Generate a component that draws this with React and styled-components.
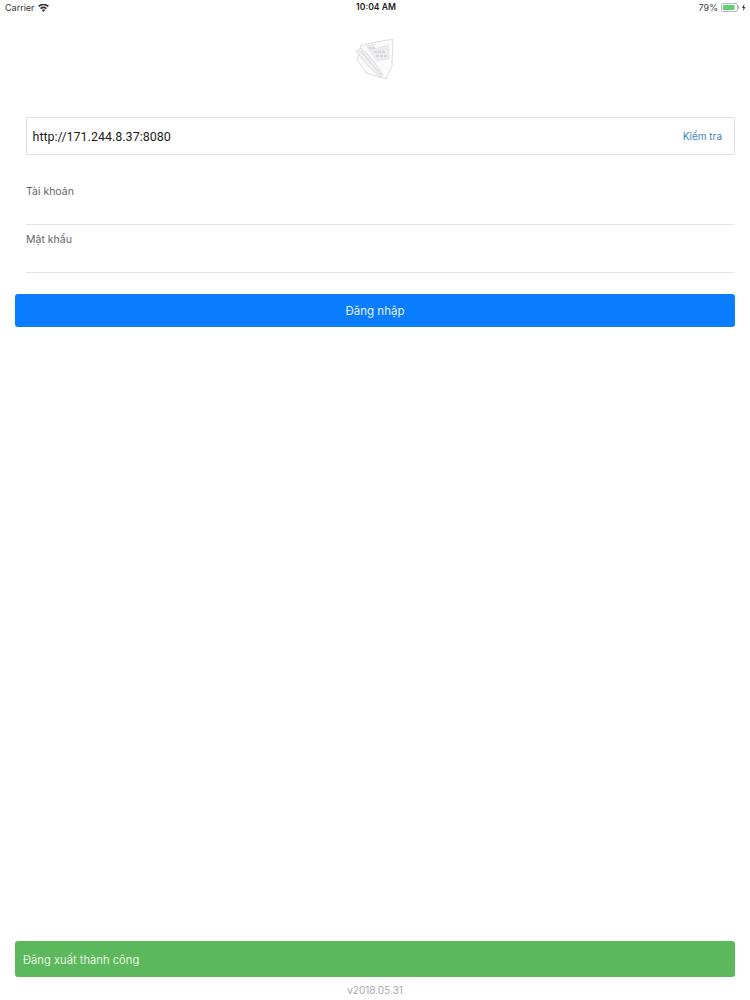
import React from "react";
import styled, { createGlobalStyle } from "styled-components";

const Global = createGlobalStyle`
  html, body { margin: 0; padding: 0; background: #fff; }
  body { font-family: Inter, "Noto Sans", "Liberation Sans", sans-serif; }
  * { box-sizing: border-box; }
`;

const Page = styled.div`
  width: 750px;
  height: 1000px;
  display: flex;
  flex-direction: column;
  overflow: hidden;
  background: #fff;
`;

const StatusBar = styled.div`
  height: 15px;
  padding: 0 3px 0 5px;
  display: grid;
  grid-template-columns: 1fr auto 1fr;
  align-items: center;
  font-size: 9px;
  line-height: 15px;
  color: #333;
`;

const StatusLeft = styled.div`
  display: flex;
  align-items: center;
  gap: 3px;
`;

const StatusTime = styled.div`
  font-size: 8.6px;
  font-weight: 600;
  color: #222;
`;

const StatusRight = styled.div`
  display: flex;
  align-items: center;
  justify-content: flex-end;
  gap: 3px;
  color: #444;
`;

const LogoWrap = styled.div`
  height: 102px;
  padding-top: 22px;
  display: flex;
  justify-content: center;
  align-items: flex-start;
`;

const Form = styled.div`
  display: flex;
  flex-direction: column;
  padding: 0 15px;
`;

const UrlBox = styled.div`
  height: 38px;
  margin-left: 10.5px;
  padding: 0 12px 0 6px;
  display: flex;
  align-items: center;
  justify-content: space-between;
  border: 1px solid #dfdfe3;
  border-radius: 1px;
`;

const UrlText = styled.span`
  font-family: Roboto, "Liberation Sans", sans-serif;
  font-size: 12.5px;
  font-weight: 400;
  color: #1d1d22;
`;

const CheckLink = styled.span`
  font-size: 10px;
  color: #3a85c6;
`;

const Field = styled.div`
  height: 48px;
  margin-left: 11px;
  padding-top: 8px;
  font-size: 10.5px;
  line-height: 14px;
  color: #666;
  border-bottom: 1px solid #e6e6e9;
`;

const FirstField = styled(Field)`
  height: 70px;
  padding-top: 30px;
`;

const LoginButton = styled.div`
  height: 33px;
  margin-top: 21px;
  display: flex;
  align-items: center;
  justify-content: center;
  background: #0a7cff;
  border-radius: 3px;
  color: #e4f1ff;
  font-size: 11.5px;
`;

const Spacer = styled.div`
  flex: 1;
`;

const Toast = styled.div`
  height: 36px;
  margin: 0 15px;
  padding: 1px 8px 0;
  display: flex;
  align-items: center;
  background: #5cb85c;
  border-radius: 3px;
  color: #e2f5e2;
  font-size: 11.2px;
`;

const Version = styled.div`
  height: 23px;
  padding-top: 2px;
  display: flex;
  align-items: center;
  justify-content: center;
  color: #a8a8ac;
  font-size: 10px;
`;

const Wifi = () => (
  <svg width="11" height="8" viewBox="0 0 11 8">
    <path d="M5.5 8 3.8 6a2.6 2.6 0 0 1 3.4 0Z" fill="#333" />
    <path d="M3.1 5.2 2 3.9a5.4 5.4 0 0 1 7 0L7.9 5.2a3.8 3.8 0 0 0-4.8 0Z" fill="#333" />
    <path d="M1.3 3.1 0 1.8a8.4 8.4 0 0 1 11 0L9.7 3.1a6.5 6.5 0 0 0-8.4 0Z" fill="#333" />
  </svg>
);

const Battery = () => (
  <svg width="26" height="9" viewBox="0 0 26 9">
    <rect x="0.5" y="0.5" width="16" height="8" rx="1.5" fill="none" stroke="#bbb" />
    <rect x="2" y="2" width="11.5" height="5" rx="0.5" fill="#5fd070" />
    <rect x="17.2" y="3" width="1" height="3" fill="#aaa" />
    <path d="M23.4 1 21 5h1.5l-.6 3 2.6-4H23z" fill="#333" />
  </svg>
);

const Logo = () => (
  <svg width="42" height="44" viewBox="0 0 42 44" fill="none">
    <path d="M7 8 39 2l-1 27-6 13-20-6L3 22Z" fill="#fbfbfb" stroke="#dfdfe1" strokeWidth="1" />
    <path d="M11 8l9-1 1 4 14-4 1 15-13 3Z" fill="#ececee" />
    <path d="M15 11h6M20 15h12M22 19h12" stroke="#cfcfd3" strokeWidth="1.6" strokeDasharray="3 1" />
    <path d="M2 14l5-3c6 5 16 17 22 27l-3 2C18 33 8 23 2 14Z" fill="#f0f0f1" stroke="#d8d8da" strokeWidth="0.8" />
    <path d="M7 14 27 38" stroke="#d4d4d7" strokeWidth="1" />
  </svg>
);

export default function App() {
  return (
    <>
      <Global />
      <Page>
        <StatusBar>
          <StatusLeft>
            Carrier <Wifi />
          </StatusLeft>
          <StatusTime>10:04 AM</StatusTime>
          <StatusRight>
            79% <Battery />
          </StatusRight>
        </StatusBar>
        <LogoWrap>
          <Logo />
        </LogoWrap>
        <Form>
          <UrlBox>
            <UrlText>http://171.244.8.37:8080</UrlText>
            <CheckLink>Kiểm tra</CheckLink>
          </UrlBox>
          <FirstField>Tài khoản</FirstField>
          <Field>Mật khẩu</Field>
          <LoginButton>Đăng nhập</LoginButton>
        </Form>
        <Spacer />
        <Toast>Đăng xuất thành công</Toast>
        <Version>v2018.05.31</Version>
      </Page>
    </>
  );
}
